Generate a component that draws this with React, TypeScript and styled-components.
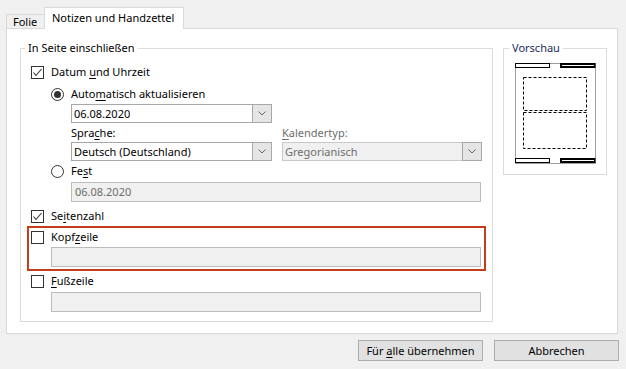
import React from 'react'
import styled, { createGlobalStyle } from 'styled-components'

const GlobalStyle = createGlobalStyle`
  html, body { margin: 0; padding: 0; background: #f0f0f0; }
  body {
    font-family: "Noto Sans", "Segoe UI", sans-serif;
    font-size: 11px;
    color: #000;
  }
`

const Dialog = styled.div`
  width: 626px;
  height: 369px;
  box-sizing: border-box;
  padding: 7px 8px 0 6px;
  display: flex;
  flex-direction: column;
  background: #f0f0f0;
`

const TabStrip = styled.div`
  height: 21px;
  display: flex;
  align-items: flex-end;
`

const Tab = styled.div<{ active?: boolean }>`
  position: relative;
  z-index: 1;
  box-sizing: border-box;
  height: ${p => (p.active ? '22px' : '14px')};
  margin-bottom: ${p => (p.active ? '-1px' : '0')};
  padding: ${p => (p.active ? '2px 0 0 7px' : '0 0 0 6px')};
  width: ${p => (p.active ? '140px' : '38px')};
  border: 1px solid #d9d9d9;
  border-bottom: none;
  border-right: ${p => (p.active ? '1px solid #d9d9d9' : 'none')};
  background: ${p => (p.active ? '#fff' : '#f0f0f0')};
  line-height: ${p => (p.active ? '16px' : '13px')};
  white-space: nowrap;
`

const Panel = styled.div`
  box-sizing: border-box;
  height: 306px;
  border: 1px solid #d9d9d9;
  background: #fff;
  padding: 11px 10px 0 13px;
  display: flex;
  align-items: flex-start;
  gap: 10px;
`

const Group = styled.fieldset<{ w: number; h: number }>`
  box-sizing: border-box;
  width: ${p => p.w}px;
  height: ${p => p.h}px;
  margin: 0;
  padding: 0;
  border: 1px solid #dcdcdc;
  min-width: 0;
`

const Legend = styled.legend<{ navy?: boolean; shift?: number }>`
  margin-left: ${p => p.shift ?? 4}px;
  padding: 0 3px;
  line-height: 16px;
  color: ${p => (p.navy ? '#1b2a5e' : '#000')};
`

const GroupBody = styled.div`
  display: flex;
  flex-direction: column;
  padding: 0 11px 0 10px;
`

const Row = styled.div<{ top: number; indent?: number }>`
  display: flex;
  align-items: center;
  gap: 7px;
  height: 16px;
  line-height: 16px;
  margin-top: ${p => p.top}px;
  margin-left: ${p => p.indent ?? 0}px;
  white-space: nowrap;
`

const Box = styled.span`
  box-sizing: border-box;
  width: 13px;
  height: 13px;
  flex: none;
  border: 1px solid #333;
  background: #fff;
  display: flex;
`

const Circle = styled.span`
  box-sizing: border-box;
  width: 13px;
  height: 13px;
  flex: none;
  border: 1px solid #333;
  border-radius: 50%;
  background: #fff;
  display: flex;
  align-items: center;
  justify-content: center;
`

const Dot = styled.span`
  width: 7px;
  height: 7px;
  border-radius: 50%;
  background: #333;
`

const U = styled.span`
  text-decoration: underline;
  text-underline-offset: 2px;
`

const Select = styled.div<{ disabled?: boolean; w: number; top: number; indent?: number }>`
  box-sizing: border-box;
  width: ${p => p.w}px;
  height: 19px;
  margin-top: ${p => p.top}px;
  margin-left: ${p => p.indent ?? 0}px;
  border: 1px solid ${p => (p.disabled ? '#c8c8c8' : '#a8a8a8')};
  background: ${p => (p.disabled ? '#f0f0f0' : '#fff')};
  color: ${p => (p.disabled ? '#6d6d6d' : '#000')};
  display: flex;
  align-items: stretch;
  line-height: 17px;
`

const SelectText = styled.span`
  flex: 1;
  padding-left: 2px;
  white-space: nowrap;
`

const ArrowBox = styled.span`
  box-sizing: border-box;
  width: 20px;
  flex: none;
  margin: -1px -1px -1px 0;
  border: 1px solid #a8a8a8;
  background: #e5e5e5;
  display: flex;
  align-items: center;
  justify-content: center;
`

const TextBox = styled.div<{ top: number; indent: number; right?: number }>`
  box-sizing: border-box;
  height: 20px;
  margin-top: ${p => p.top}px;
  margin-left: ${p => p.indent}px;
  margin-right: ${p => p.right ?? 0}px;
  border: 1px solid #bcbcbc;
  background: #f0f0f0;
  color: #6d6d6d;
  padding-left: 3px;
  line-height: 18px;
`

const Columns = styled.div`
  display: grid;
  grid-template-columns: 201px 200px;
  column-gap: 10px;
  margin-left: 40px;
  margin-top: 2px;
`

const Label = styled.div<{ muted?: boolean }>`
  height: 16px;
  line-height: 16px;
  margin-bottom: 1px;
  color: ${p => (p.muted ? '#6d6d6d' : '#000')};
`

const Highlight = styled.div`
  box-sizing: border-box;
  height: 45px;
  margin: 2px -5px 0 -4px;
  border: 2px solid #c43e1c;
  padding: 1px 3px 2px 2px;
  display: flex;
  flex-direction: column;
`

const Preview = styled.svg`
  display: block;
  margin: 7px 0 0 11px;
`

const ButtonRow = styled.div`
  display: flex;
  justify-content: flex-end;
  gap: 11px;
  margin-top: 6px;
  margin-right: -1px;
`

const Button = styled.button`
  box-sizing: border-box;
  width: 125px;
  height: 21px;
  padding: 0;
  border: 1px solid #adadad;
  background: #e1e1e1;
  font: inherit;
  color: #000;
  line-height: 19px;
`

const Chevron = () => (
  <svg width="8" height="5" viewBox="0 0 8 5">
    <path d="M0.5 0.5 L4 4 L7.5 0.5" fill="none" stroke="#666" strokeWidth="1" />
  </svg>
)

const Check: React.FC<{ checked?: boolean }> = ({ checked }) => (
  <Box>
    {checked && (
      <svg width="11" height="11" viewBox="0 0 11 11">
        <path d="M1.5 5.5 L4 8.5 L9.5 2" fill="none" stroke="#333" strokeWidth="1.1" />
      </svg>
    )}
  </Box>
)

const Radio: React.FC<{ checked?: boolean }> = ({ checked }) => (
  <Circle>{checked && <Dot />}</Circle>
)

const PagePreview = () => (
  <Preview width="81" height="101" viewBox="0 0 81 101">
    <rect x="0.5" y="0.5" width="80" height="100" fill="#fff" stroke="#a0a0a0" />
    <rect x="0.5" y="0.5" width="34" height="4" fill="#fff" stroke="#000" />
    <rect x="46" y="1" width="33.5" height="3" fill="#fff" stroke="#000" strokeWidth="2" />
    <rect x="0.5" y="95.5" width="34" height="4" fill="#fff" stroke="#000" />
    <rect x="46" y="96" width="33.5" height="3" fill="#fff" stroke="#000" strokeWidth="2" />
    <rect x="8.5" y="14.5" width="63" height="33" fill="none" stroke="#000" strokeDasharray="3 2" />
    <rect x="8.5" y="49.5" width="63" height="36" fill="none" stroke="#000" strokeDasharray="3 2" />
  </Preview>
)

export default function App() {
  return (
    <>
      <GlobalStyle />
      <Dialog>
        <TabStrip>
          <Tab>Folie</Tab>
          <Tab active>Notizen und Handzettel</Tab>
        </TabStrip>
        <Panel>
          <Group w={473} h={282}>
            <Legend>In Seite einschließen</Legend>
            <GroupBody>
              <Row top={8}>
                <Check checked />
                <span>Datum <U>u</U>nd Uhrzeit</span>
              </Row>
              <Row top={6} indent={20}>
                <Radio checked />
                <span>Auto<U>m</U>atisch aktualisieren</span>
              </Row>
              <Select w={201} top={2} indent={40}>
                <SelectText>06.08.2020</SelectText>
                <ArrowBox><Chevron /></ArrowBox>
              </Select>
              <Columns>
                <Label>Spra<U>c</U>he:</Label>
                <Label muted><U>K</U>alendertyp:</Label>
                <Select w={201} top={0}>
                  <SelectText>Deutsch (Deutschland)</SelectText>
                  <ArrowBox><Chevron /></ArrowBox>
                </Select>
                <Select w={200} top={0} disabled>
                  <SelectText>Gregorianisch</SelectText>
                  <ArrowBox><Chevron /></ArrowBox>
                </Select>
              </Columns>
              <Row top={2} indent={20}>
                <Radio />
                <span>Fe<U>s</U>t</span>
              </Row>
              <TextBox top={3} indent={40}>06.08.2020</TextBox>
              <Row top={6}>
                <Check checked />
                <span>Se<U>i</U>tenzahl</span>
              </Row>
              <Highlight>
                <Row top={0}>
                  <Check />
                  <span>Kopf<U>z</U>eile</span>
                </Row>
                <TextBox top={2} indent={20} />
              </Highlight>
              <Row top={2}>
                <Check />
                <span><U>F</U>ußzeile</span>
              </Row>
              <TextBox top={3} indent={20} />
            </GroupBody>
          </Group>
          <Group w={104} h={135}>
            <Legend navy shift={5}>Vorschau</Legend>
            <PagePreview />
          </Group>
        </Panel>
        <ButtonRow>
          <Button>Für <U>a</U>lle übernehmen</Button>
          <Button>Abbrechen</Button>
        </ButtonRow>
      </Dialog>
    </>
  )
}
